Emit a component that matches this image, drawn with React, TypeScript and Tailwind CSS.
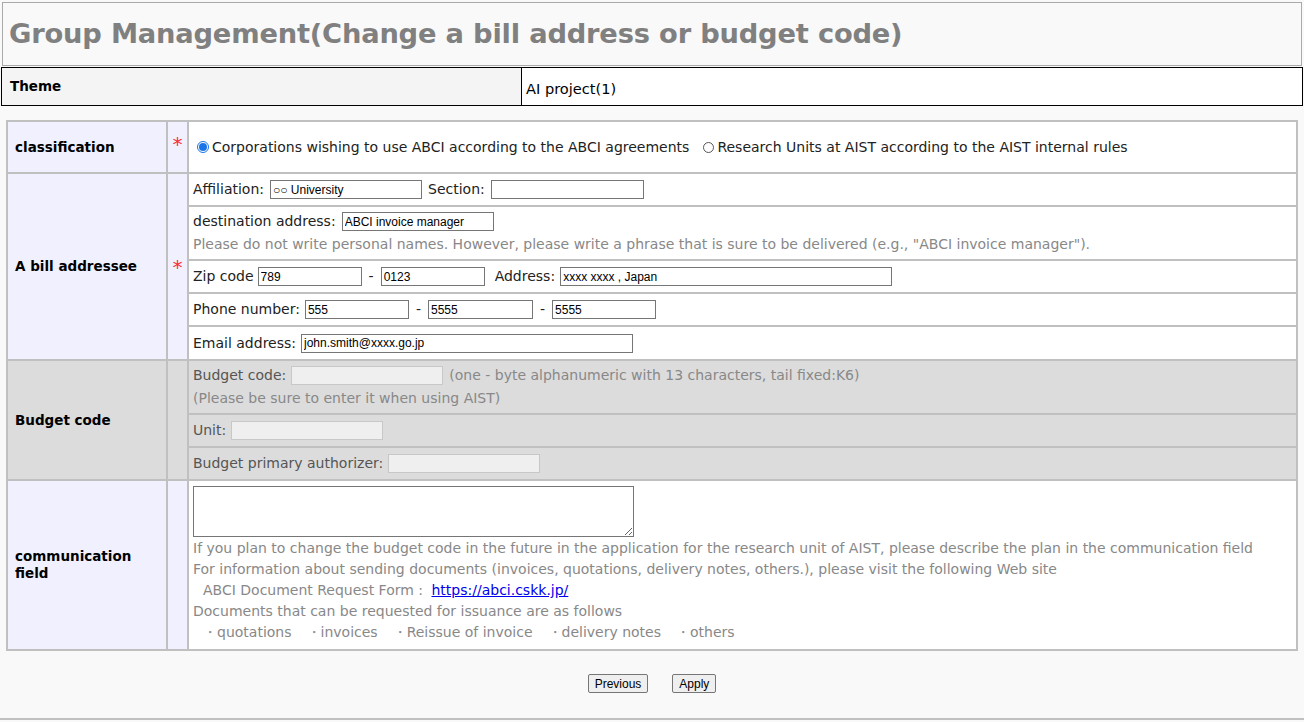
import React from 'react'

const inputCls =
  'h-[19px] border border-[#767676] bg-white px-[2px] text-[12px] text-black outline-none'
const disabledCls =
  'h-[19px] border border-[#c8c8c8] bg-[#efefef] px-[2px] text-[12px] outline-none'

function Field({ w, value }: { w: number; value?: string }) {
  return (
    <input
      readOnly
      value={value ?? ''}
      style={{ width: w, fontFamily: '"Liberation Sans", Arial, sans-serif' }}
      className={inputCls}
    />
  )
}

function Disabled({ w }: { w: number }) {
  return <input disabled style={{ width: w }} className={disabledCls} />
}

export default function App() {
  const cell = 'border-2 border-[#c0c0c0]'
  return (
    <div
      className="min-h-[722px] bg-[#f9f9f9] text-[14px] text-[#222]"
      style={{ fontFamily: '"DejaVu Sans", Verdana, sans-serif' }}
    >
      <div className="pt-[2px] px-[2px]">
        <div className="h-[64px] border border-[#aaa] flex items-center px-[6px]">
          <h1 className="text-[27.3px] font-bold text-[#808080] tracking-[-0.2px]">
            Group Management(Change a bill address or budget code)
          </h1>
        </div>
      </div>

      <div className="mt-[1px] mx-[1px] h-[39px] border border-black flex">
        <div className="w-[520px] bg-[#f4f4f4] border-r border-black px-[8px] flex items-center font-bold text-[13.5px] text-black">
          Theme
        </div>
        <div className="flex-1 bg-white px-[4px] flex items-center text-[14.6px] text-black pt-[4px]">
          AI project(1)
        </div>
      </div>

      <div className="pt-[14px] px-[6px]">
        <table className="w-[1292px] border-collapse text-[14px]">
          <tbody>
            <tr className="h-[52px]">
              <td className={`${cell} w-[160px] bg-[#f0f0ff] px-[7px] font-bold text-black text-[13.5px]`}>classification</td>
              <td className={`${cell} w-[21px] bg-[#f0f0ff] text-center align-top pt-[12px] text-red-500 text-[20px] leading-none`}>*</td>
              <td className={`${cell} bg-white px-[8px]`}>
                <div className="flex items-center">
                  <span className="w-[12px] h-[12px] rounded-full border border-[#1a73e8] flex items-center justify-center mr-[3px]">
                    <span className="w-[8px] h-[8px] rounded-full bg-[#1a73e8]" />
                  </span>
                  <span>Corporations wishing to use ABCI according to the ABCI agreements</span>
                  <span className="ml-[14px] w-[11px] h-[11px] rounded-full border border-[#555] mr-[3px]" />
                  <span>Research Units at AIST according to the AIST internal rules</span>
                </div>
              </td>
            </tr>

            <tr className="h-[33px]">
              <td rowSpan={5} className={`${cell} bg-[#f0f0ff] px-[7px] font-bold text-black text-[13.5px]`}>A bill addressee</td>
              <td rowSpan={5} className={`${cell} bg-[#f0f0ff] text-center text-red-500 text-[20px] leading-none`}>*</td>
              <td className={`${cell} bg-white px-[4px]`}>
                <div className="flex items-center gap-[6px]">
                  <span>Affiliation:</span>
                  <Field w={152} value="○○ University" />
                  <span>Section:</span>
                  <Field w={153} />
                </div>
              </td>
            </tr>
            <tr className="h-[54px]">
              <td className={`${cell} bg-white px-[4px]`}>
                <div className="flex items-center gap-[6px]">
                  <span>destination address:</span>
                  <Field w={152} value="ABCI invoice manager" />
                </div>
                <div className="text-[#888] mt-[2px]">
                  Please do not write personal names. However, please write a phrase that is sure to be delivered (e.g., "ABCI invoice manager").
                </div>
              </td>
            </tr>
            <tr className="h-[33px]">
              <td className={`${cell} bg-white px-[4px]`}>
                <div className="flex items-center">
                  <span className="mr-[4px]">Zip code</span>
                  <Field w={104} value="789" />
                  <span className="mx-[7px]">-</span>
                  <Field w={104} value="0123" />
                  <span className="ml-[10px] mr-[5px]">Address:</span>
                  <Field w={332} value="xxxx xxxx , Japan" />
                </div>
              </td>
            </tr>
            <tr className="h-[33px]">
              <td className={`${cell} bg-white px-[4px]`}>
                <div className="flex items-center">
                  <span className="mr-[5px]">Phone number:</span>
                  <Field w={104} value="555" />
                  <span className="mx-[7px]">-</span>
                  <Field w={105} value="5555" />
                  <span className="mx-[7px]">-</span>
                  <Field w={104} value="5555" />
                </div>
              </td>
            </tr>
            <tr className="h-[34px]">
              <td className={`${cell} bg-white px-[4px]`}>
                <div className="flex items-center gap-[5px]">
                  <span>Email address:</span>
                  <Field w={332} value="john.smith@xxxx.go.jp" />
                </div>
              </td>
            </tr>

            <tr className="h-[54px]">
              <td rowSpan={3} className={`${cell} bg-[#dcdcdc] px-[7px] font-bold text-black text-[13.5px]`}>Budget code</td>
              <td rowSpan={3} className={`${cell} bg-[#dcdcdc]`} />
              <td className={`${cell} bg-[#dcdcdc] px-[4px] text-[#555]`}>
                <div className="flex items-center">
                  <span className="mr-[5px]">Budget code:</span>
                  <Disabled w={152} />
                  <span className="ml-[6px] text-[#888]">(one - byte alphanumeric with 13 characters, tail fixed:K6)</span>
                </div>
                <div className="text-[#888] mt-[2px]">(Please be sure to enter it when using AIST)</div>
              </td>
            </tr>
            <tr className="h-[33px]">
              <td className={`${cell} bg-[#dcdcdc] px-[4px] text-[#555]`}>
                <div className="flex items-center gap-[5px]">
                  <span>Unit:</span>
                  <Disabled w={152} />
                </div>
              </td>
            </tr>
            <tr className="h-[33px]">
              <td className={`${cell} bg-[#dcdcdc] px-[4px] text-[#555]`}>
                <div className="flex items-center gap-[5px]">
                  <span>Budget primary authorizer:</span>
                  <Disabled w={152} />
                </div>
              </td>
            </tr>

            <tr className="h-[170px]">
              <td className={`${cell} bg-[#f0f0ff] px-[7px] font-bold text-black text-[13.5px] leading-[17px]`}>
                communication
                <br />
                field
              </td>
              <td className={`${cell} bg-[#f0f0ff]`} />
              <td className={`${cell} bg-white px-[4px] pt-[5px] align-top text-[#888] leading-[21px]`}>
                <textarea
                  readOnly
                  className="block w-[441px] h-[51px] border border-[#767676] bg-white resize-y outline-none"
                />
                <div className="mt-[1px]">If you plan to change the budget code in the future in the application for the research unit of AIST, please describe the plan in the communication field</div>
                <div>For information about sending documents (invoices, quotations, delivery notes, others.), please visit the following Web site</div>
                <div className="pl-[10px]">
                  ABCI Document Request Form :{' '}
                  <a href="#" className="ml-[4px] text-[#0000ee] underline">https://abci.cskk.jp/</a>
                </div>
                <div>Documents that can be requested for issuance are as follows</div>
                <div className="pl-[10px] flex gap-[15px]">
                  <span>・quotations</span>
                  <span>・invoices</span>
                  <span>・Reissue of invoice</span>
                  <span>・delivery notes</span>
                  <span>・others</span>
                </div>
              </td>
            </tr>
          </tbody>
        </table>
      </div>

      <div
        className="h-[69px] border-b-2 border-[#c0c0c0] flex items-center justify-center gap-[24px] pb-[3px]"
        style={{ fontFamily: '"Liberation Sans", Arial, sans-serif' }}
      >
        <button className="h-[19px] px-[6px] border border-[#767676] bg-[#efefef] text-[12px] text-black rounded-[2px]">Previous</button>
        <button className="h-[19px] px-[6px] border border-[#767676] bg-[#efefef] text-[12px] text-black rounded-[2px]">Apply</button>
      </div>
    </div>
  )
}
